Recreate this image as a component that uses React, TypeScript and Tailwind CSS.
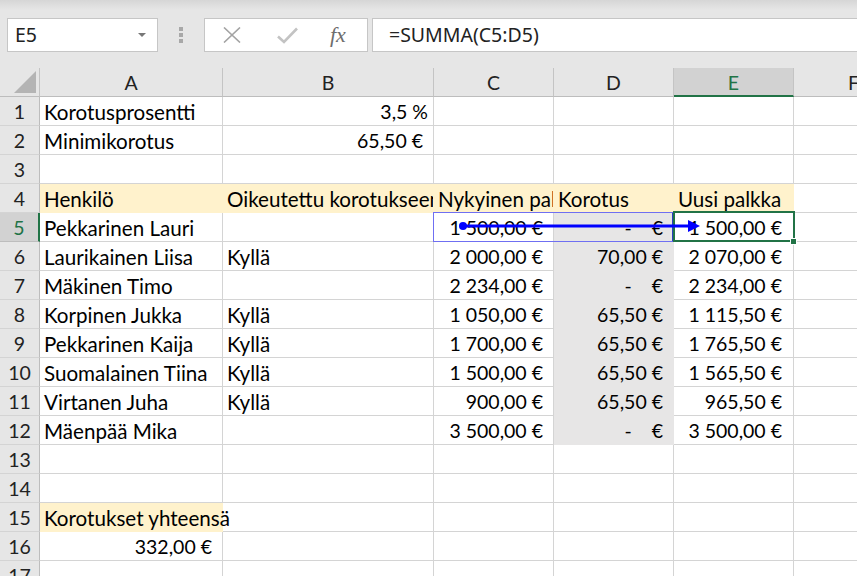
import React from "react";

type Cell = {
  t?: string;
  align?: "l" | "r" | "dash";
  fill?: "o" | "g";
  pr?: number;
  over?: boolean;
};

const L = (t: string, fill?: "o" | "g"): Cell => ({ t, align: "l", fill });
const R = (t: string, fill?: "o" | "g", pr = 10): Cell => ({ t, align: "r", fill, pr });
const E: Cell = {};
const DASH: Cell = { align: "dash", fill: "g" };

const rows: Cell[][] = [
  [L("Korotusprosentti"), R("3,5 %", undefined, 5), E, E, E, E],
  [L("Minimikorotus"), R("65,50 €"), E, E, E, E],
  [E, E, E, E, E, E],
  [L("Henkilö", "o"), L("Oikeutettu korotukseen", "o"), L("Nykyinen palkka", "o"), L("Korotus", "o"), L("Uusi palkka", "o"), E],
  [L("Pekkarinen Lauri"), E, R("1 500,00 €"), DASH, R("1 500,00 €", undefined, 11), E],
  [L("Laurikainen Liisa"), L("Kyllä"), R("2 000,00 €"), R("70,00 €", "g"), R("2 070,00 €", undefined, 11), E],
  [L("Mäkinen Timo"), E, R("2 234,00 €"), DASH, R("2 234,00 €", undefined, 11), E],
  [L("Korpinen Jukka"), L("Kyllä"), R("1 050,00 €"), R("65,50 €", "g"), R("1 115,50 €", undefined, 11), E],
  [L("Pekkarinen Kaija"), L("Kyllä"), R("1 700,00 €"), R("65,50 €", "g"), R("1 765,50 €", undefined, 11), E],
  [L("Suomalainen Tiina"), L("Kyllä"), R("1 500,00 €"), R("65,50 €", "g"), R("1 565,50 €", undefined, 11), E],
  [L("Virtanen Juha"), L("Kyllä"), R("900,00 €"), R("65,50 €", "g"), R("965,50 €", undefined, 11), E],
  [L("Mäenpää Mika"), E, R("3 500,00 €"), DASH, R("3 500,00 €", undefined, 11), E],
  [E, E, E, E, E, E],
  [E, E, E, E, E, E],
  [{ t: "Korotukset yhteensä", align: "l", fill: "o", over: true }, E, E, E, E, E],
  [R("332,00 €"), E, E, E, E, E],
  [E, E, E, E, E, E],
];

const cols = ["A", "B", "C", "D", "E", "F"];

function CellView({ c }: { c: Cell }) {
  const fillCls =
    c.fill === "o"
      ? "bg-[#fff2cc] border-r-[#fff2cc] border-b-[#fff2cc]"
      : c.fill === "g"
      ? "bg-[#e7e6e6] border-r-[#e7e6e6] border-b-[#e7e6e6]"
      : "bg-white border-r-[#d4d4d4] border-b-[#d4d4d4]";
  let inner: React.ReactNode = null;
  if (c.align === "l" && c.t) {
    inner = (
      <div className={`pl-[4px] whitespace-nowrap text-[20.6px] ${c.over ? "relative z-10" : ""}`}>{c.t}</div>
    );
  } else if (c.align === "r" && c.t) {
    inner = (
      <div className="flex justify-end whitespace-nowrap" style={{ paddingRight: c.pr }}>
        {c.t}
      </div>
    );
  } else if (c.align === "dash") {
    inner = (
      <div className="flex justify-end whitespace-nowrap pr-[10px]">
        <span>-</span>
        <span className="ml-[20px]">€</span>
      </div>
    );
  }
  return (
    <div
      className={`h-[29px] border-r border-b pt-[2px] leading-[26px] ${
        c.over ? "overflow-visible relative z-10" : "overflow-hidden"
      } ${fillCls}`}
    >
      {inner}
    </div>
  );
}

export default function App() {
  return (
    <div
      className="w-[859px] h-[578px] bg-white overflow-hidden text-black"
      style={{ fontFamily: "Lato, sans-serif" }}
    >
      <div className="w-[857px] h-[576px] relative overflow-hidden">
        {/* Toolbar */}
        <div className="h-[68px] bg-[#e6e6e6] relative">
          <div className="h-[10px] bg-gradient-to-b from-[#d6d6d6] to-[#e6e6e6]" />
          <div className="flex items-center pt-[8px] pl-[7px] h-[42px]">
            <div className="w-[151px] h-[34px] bg-white border border-[#c6c6c6] flex items-center justify-between pl-[7px] pr-[11px]">
              <span className="text-[19.5px] text-[#222]" style={{ fontFamily: "'Noto Sans', sans-serif" }}>
                E5
              </span>
              <svg width="8" height="5" viewBox="0 0 8 5">
                <path d="M0 0 L8 0 L4 4 Z" fill="#777" />
              </svg>
            </div>
            <div className="w-[46px] flex flex-col items-center gap-[2px]">
              <div className="w-[4px] h-[4px] bg-[#a8a8a8]" />
              <div className="w-[4px] h-[4px] bg-[#a8a8a8]" />
              <div className="w-[4px] h-[4px] bg-[#a8a8a8]" />
            </div>
            <div className="w-[164px] h-[34px] bg-white border border-[#c6c6c6] flex items-center pl-[18px]">
              <svg width="18" height="16" viewBox="0 0 18 16">
                <path d="M1 0.5 L17 15.5 M17 0.5 L1 15.5" stroke="#a3a3a3" strokeWidth="1.6" fill="none" />
              </svg>
              <svg width="21" height="17" viewBox="0 0 21 17" className="ml-[36px]">
                <path d="M1 9.5 L7 15 L20 1.5" stroke="#c3c3c3" strokeWidth="2.6" fill="none" />
              </svg>
              <span
                className="ml-[32px] italic text-[22px] text-[#6d6d6d] leading-none"
                style={{ fontFamily: "'Liberation Serif', serif" }}
              >
                fx
              </span>
            </div>
            <div className="ml-[4px] flex-1 h-[34px] bg-white border border-r-0 border-[#c6c6c6] flex items-center pl-[16px]">
              <span className="text-[19.5px] text-[#222]" style={{ fontFamily: "'Noto Sans', sans-serif" }}>
                =SUMMA(C5:D5)
              </span>
            </div>
          </div>
        </div>

        {/* Sheet */}
        <div className="relative text-[19.5px]">
          <div className="grid grid-cols-[40px_183px_211px_120px_120px_120px_120px]">
            {/* header row */}
            <div className="h-[29px] bg-[#e6e6e6] border-r border-b border-r-[#c4c4c4] border-b-[#bdbdbd] relative overflow-hidden">
              <svg width="40" height="28" viewBox="0 0 40 28" className="absolute left-0 top-0">
                <path d="M36 3 L36 25 L14 25 Z" fill="#b4b4b4" />
              </svg>
            </div>
            {cols.map((c) =>
              c === "E" ? (
                <div
                  key={c}
                  className="h-[29px] bg-[#d2d2d2] border-r border-b-2 border-r-[#c4c4c4] border-b-[#217346] flex items-center justify-center pt-[2px] text-[#217346]"
                >
                  {c}
                </div>
              ) : (
                <div
                  key={c}
                  className="h-[29px] bg-[#e6e6e6] border-r border-b border-r-[#c4c4c4] border-b-[#bdbdbd] flex items-center justify-center pt-[2px] text-[#222]"
                >
                  {c}
                </div>
              )
            )}
            {rows.map((r, i) => (
              <React.Fragment key={i}>
                {i === 4 ? (
                  <div className="h-[29px] bg-[#d2d2d2] border-r-2 border-b border-r-[#217346] border-b-[#bdbdbd] text-center pt-[2px] leading-[26px] text-[#217346]">
                    {i + 1}
                  </div>
                ) : (
                  <div className="h-[29px] bg-[#e6e6e6] border-r border-b border-r-[#bdbdbd] border-b-[#d4d4d4] text-center pt-[2px] leading-[26px] text-[#222]">
                    {i + 1}
                  </div>
                )}
                {r.map((c, j) => (
                  <CellView key={j} c={c} />
                ))}
              </React.Fragment>
            ))}
          </div>

          {/* Precedent range box C5:D5 */}
          <div className="absolute left-[433px] top-[144px] w-[241px] h-[30px] border border-[#6f6ff2] border-r-2 border-r-[#2b3fbd]" />
          {/* Selected cell E5 */}
          <div className="absolute left-[673px] top-[143px] w-[122px] h-[31px] border-2 border-[#217346]" />
          <div className="absolute left-[790px] top-[170px] w-[7px] h-[7px] bg-[#217346] border border-white" />
          {/* Trace arrow */}
          <svg className="absolute left-0 top-0 pointer-events-none" width="857" height="300">
            <circle cx="463" cy="158" r="4" fill="#0000ff" />
            <line x1="463" y1="158" x2="690" y2="158" stroke="#0000ff" strokeWidth="3" />
            <path d="M688 152 L700 158 L688 164 Z" fill="#0000ff" />
          </svg>
        </div>
      </div>
    </div>
  );
}
